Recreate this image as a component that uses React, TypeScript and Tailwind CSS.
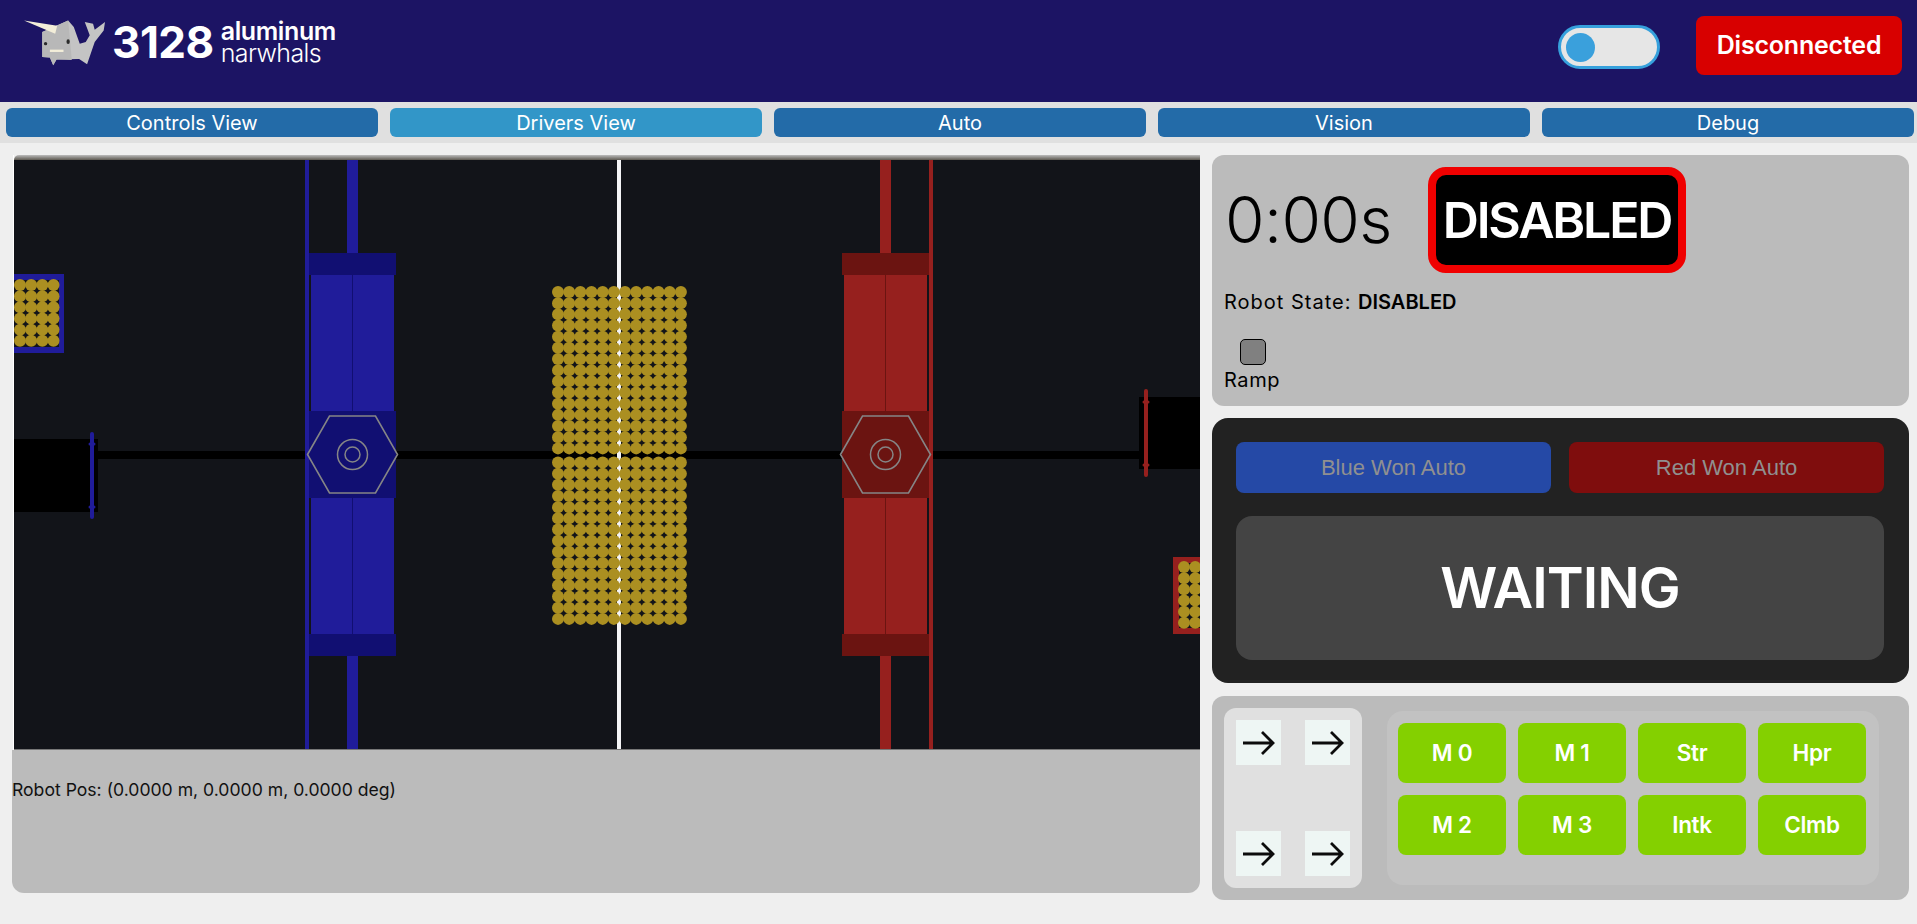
import React from 'react';

const sans = "font-['Inter','Noto_Sans',sans-serif]";

const tabs = ['Controls View', 'Drivers View', 'Auto', 'Vision', 'Debug'];
const motors = ['M 0', 'M 1', 'Str', 'Hpr', 'M 2', 'M 3', 'Intk', 'Clmb'];

const BALL = '#ab8f21';
const PITCH = 11.17;

// a block of game pieces, cx/cy is the first ball
const Balls = ({ cx, cy, cols, rows }: { cx: number; cy: number; cols: number; rows: number }) => {
    const out = [];
    for (let c = 0; c < cols; c++) {
        for (let r = 0; r < rows; r++) {
            out.push(<circle key={`${c}-${r}`} cx={cx + c * PITCH} cy={cy + r * PITCH} r={6} fill={BALL} />);
        }
    }
    return <>{out}</>;
};

const Hub = ({ x, main, dark }: { x: number; main: string; dark: string }) => (
    <>
        <rect x={x - 41.5} y={275} width={83} height={359} fill={main} />
        <rect x={x - 0.5} y={275} width={1} height={359} fill={dark} />
        <rect x={x - 5.5} y={160} width={11} height={93} fill={main} />
        <rect x={x - 5.5} y={656} width={11} height={94} fill={main} />
        <rect x={x - 43.5} y={253} width={87} height={22} fill={dark} />
        <rect x={x - 43.5} y={634} width={87} height={22} fill={dark} />
        <rect x={x - 43.5} y={411} width={87} height={87} fill={dark} />
        <polygon
            points={`${x - 45},454.5 ${x - 23},416 ${x + 23},416 ${x + 45},454.5 ${x + 23},493 ${x - 23},493`}
            fill="none"
            stroke="#858586"
            strokeWidth={1.6}
        />
        <circle cx={x} cy={454.5} r={15} fill="none" stroke="#858586" strokeWidth={1.5} />
        <circle cx={x} cy={454.5} r={7.5} fill="none" stroke="#858586" strokeWidth={1.5} />
    </>
);

const Field = () => (
    <svg viewBox="14 160 1186 589" className="block h-[589px] w-[1186px] shrink-0">
        <rect x={14} y={160} width={1186} height={589} fill="#121419" />
        {/* black bar across the field */}
        <rect x={14} y={439} width={84} height={73} fill="#000" />
        <rect x={1139} y={397} width={61} height={72} fill="#000" />
        <rect x={98} y={451} width={1041} height={8} fill="#000" />
        {/* centre line */}
        <rect x={617} y={160} width={4} height={589} fill="#f4f4f6" />
        <Balls cx={558} cy={292} cols={12} rows={15} />
        <Balls cx={558} cy={462.5} cols={12} rows={15} />

        {/* blue side */}
        <rect x={305} y={160} width={4} height={589} fill="#201c9a" />
        <Hub x={352.5} main="#201c9a" dark="#110f72" />
        <rect x={90} y={432} width={4} height={87} rx={2} fill="#201c9a" />
        <rect x={88.5} y={442.5} width={7} height={3} rx={1.5} fill="#201c9a" />
        <rect x={88.5} y={505.5} width={7} height={3} rx={1.5} fill="#201c9a" />
        <path d="M14 274H64V353H14V347H59V280H14Z" fill="#201c9a" />
        <Balls cx={20} cy={285} cols={4} rows={6} />

        {/* red side */}
        <rect x={929} y={160} width={4} height={589} fill="#96201e" />
        <Hub x={885.5} main="#96201e" dark="#6b1411" />
        <rect x={1144} y={389} width={4} height={88} rx={2} fill="#96201e" />
        <rect x={1142.5} y={400.5} width={7} height={3} rx={1.5} fill="#96201e" />
        <rect x={1142.5} y={463.5} width={7} height={3} rx={1.5} fill="#96201e" />
        <path d="M1200 557H1173V634H1200V628H1179V563H1200Z" fill="#96201e" />
        <Balls cx={1184} cy={567} cols={2} rows={6} />
    </svg>
);

const Logo = () => (
    <svg viewBox="60 50 265 150" className="h-[50px] w-[88px] shrink-0">
        <path d="M127 95L205 60L222 80L240 130L258 125L270 105L255 65L280 70L285 88L316 65L312 90L285 125L262 192L238 176L170 178L160 195L150 172L127 170Z" fill="#c4c4c4" />
        <path d="M127 95L205 60L216 179L170 178L160 195L150 172L127 170Z" fill="#b8b8b8" />
        <path d="M72 60L172 76L166 100Z" fill="#f3eed9" />
        <circle cx={137} cy={130} r={5} fill="#2b2b2b" />
        <ellipse cx={205} cy={124} rx={5} ry={7} fill="#2b2b2b" />
        <rect x={150} y={148} width={41} height={7} fill="#f3eed9" />
    </svg>
);

const Arrow = () => (
    <svg viewBox="0 0 32 24" className="h-6 w-8">
        <path d="M0 12H30M19 1L30 12L19 23" fill="none" stroke="#0c0c0c" strokeWidth={2.8} />
    </svg>
);

const ArrowCell = () => (
    <div className="flex h-[45px] w-[45px] items-center justify-center bg-[#eef6f4]">
        <Arrow />
    </div>
);

export default function App() {
    return (
        <div className={`${sans} min-h-screen bg-[#efefef] text-black`}>
            <header className="flex h-[102px] items-start bg-[#1c1464]">
                <div className="ml-[20px] mt-[17px] flex items-start">
                    <Logo />
                    <span className="ml-[4px] mt-[1px] text-[44px] font-bold leading-[48px] tracking-[-0.5px] text-white">3128</span>
                    <div className="ml-[7px] mt-[2px] flex flex-col text-white">
                        <span className="text-[25px] font-semibold leading-[24px] tracking-[-0.4px]">aluminum</span>
                        <span className="text-[25px] font-light leading-[20px] tracking-[-0.6px]">narwhals</span>
                    </div>
                </div>
                <div className="ml-auto mr-[15px] mt-[16px] flex items-start">
                    <div className="mt-[9px] flex h-[44px] w-[102px] items-center rounded-full border-[3px] border-[#36a0dc] bg-[#e6e6e6] pl-[5px]">
                        <div className="h-[29px] w-[29px] rounded-full bg-[#3aa0dc]" />
                    </div>
                    <div className="ml-[36px] flex h-[59px] w-[206px] items-center justify-center rounded-lg bg-[#d80000] text-[25px] font-semibold tracking-[-0.2px] text-white">
                        Disconnected
                    </div>
                </div>
            </header>

            <nav className="flex h-[41px] items-center gap-3 bg-[#e0e0e0] pl-[6px]">
                {tabs.map((t) => (
                    <div
                        key={t}
                        className={`flex h-[29px] w-[372px] items-center justify-center rounded-md text-[20px] text-white ${t === 'Drivers View' ? 'bg-[#3296c8]' : 'bg-[#236ba8]'}`}
                    >
                        {t}
                    </div>
                ))}
            </nav>

            <main className="flex items-start gap-3 pl-3 pt-3">
                <section className="flex h-[738px] w-[1188px] flex-col overflow-hidden rounded-b-xl bg-[#bbbbbb]">
                    <div className="flex h-[595px] shrink-0 bg-[#efefef]">
                        <div className="w-[2px] border-r border-white" />
                        <div className="flex flex-col">
                            <div className="h-[5px] rounded-tl-md bg-linear-to-b from-[#bdbdbd] to-[#5e5a52]" />
                            <Field />
                            <div className="h-px bg-[#777777]" />
                        </div>
                    </div>
                    <p className="mt-[28px] text-[17.6px] leading-6 text-[#111]">Robot Pos: (0.0000 m, 0.0000 m, 0.0000 deg)</p>
                </section>

                <div className="flex w-[697px] flex-col">
                    <section className="h-[251px] rounded-xl bg-[#bbbbbb] pl-[12px] pt-3">
                        <div className="flex items-center">
                            <div className="w-[204px] pl-[1px] text-[64px] font-light leading-[106px] tracking-[-0.6px]">0:00s</div>
                            <div className="flex h-[106px] w-[258px] items-center justify-center rounded-[18px] border-8 border-[#f00000] bg-black text-[50px] font-semibold tracking-[-2.2px] text-white">
                                DISABLED
                            </div>
                        </div>
                        <p className="mt-[17px] text-[20px] leading-6 tracking-[1px]">
                            Robot State: <b className="font-semibold tracking-[0px]">DISABLED</b>
                        </p>
                        <div className="ml-[16px] mt-[25px] h-[26px] w-[26px] rounded-[5px] border border-black bg-[#808080]" />
                        <p className="mt-[3px] text-[20px] leading-6 tracking-[0.6px]">Ramp</p>
                    </section>

                    <section className="mt-3 h-[265px] rounded-2xl bg-[#222222] p-6">
                        <div className="flex gap-[18px] font-['Liberation_Sans',Arial,sans-serif] text-[22px] text-[#909090]">
                            <div className="flex h-[51px] w-[315px] items-center justify-center rounded-lg bg-[#2549a6]">Blue Won Auto</div>
                            <div className="flex h-[51px] w-[315px] items-center justify-center rounded-lg bg-[#7f0d0d]">Red Won Auto</div>
                        </div>
                        <div className="mt-[23px] flex h-[144px] w-[648px] items-center justify-center rounded-2xl bg-[#444444] text-[56px] font-semibold tracking-[-1px] text-white">
                            WAITING
                        </div>
                    </section>

                    <section className="mt-[13px] flex h-[204px] items-start rounded-xl bg-[#bbbbbb] pl-3">
                        <div className="mt-3 flex h-[180px] w-[138px] flex-col justify-between rounded-xl bg-[#e0e0e0] p-3">
                            <div className="flex justify-between">
                                <ArrowCell />
                                <ArrowCell />
                            </div>
                            <div className="flex justify-between">
                                <ArrowCell />
                                <ArrowCell />
                            </div>
                        </div>
                        <div className="ml-[25px] mt-[15px] h-[174px] w-[492px] rounded-2xl bg-[#c2c2c2] pl-[11px] pt-3">
                            <div className="grid grid-cols-[repeat(4,108px)] gap-3">
                                {motors.map((m) => (
                                    <div key={m} className="flex h-[60px] items-center justify-center rounded-lg bg-[#84d000] text-[22.5px] font-semibold tracking-[-0.3px] text-white">
                                        {m}
                                    </div>
                                ))}
                            </div>
                        </div>
                    </section>
                </div>
            </main>
        </div>
    );
}
